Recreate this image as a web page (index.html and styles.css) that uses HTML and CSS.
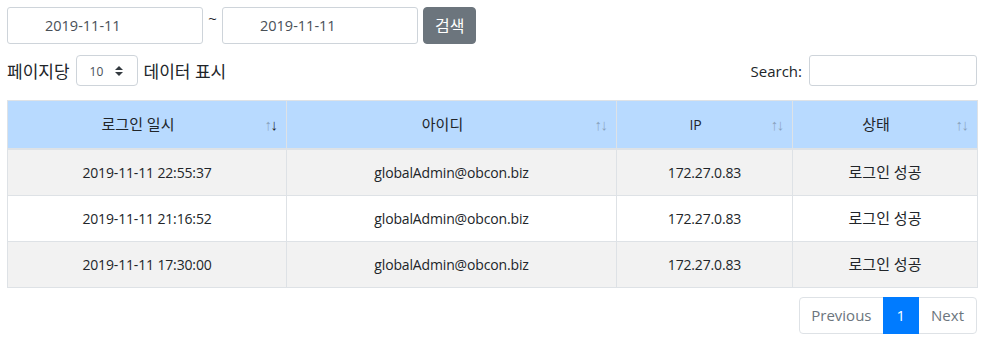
FILE: index.html
```html
<!DOCTYPE html>
<html lang="ko">
<head>
<meta charset="utf-8">
<title>로그인 이력</title>
<link rel="stylesheet" href="styles.css">
</head>
<body>
<div class="page">
  <div class="filter">
    <input class="date-input" type="text" value="2019-11-11">
    <span class="tilde">~</span>
    <input class="date-input" type="text" value="2019-11-11">
    <button class="btn-search" type="button">검색</button>
  </div>

  <div class="toolbar">
    <label class="length">페이지당
      <span class="select"><span class="select-value">10</span>
        <svg class="select-arrow" width="8" height="10" viewBox="0 0 4 5"><path d="M2 0L0 2h4zm0 5L0 3h4z" fill="#343a40"/></svg>
      </span>
      데이터 표시</label>
    <label class="search">Search: <input class="search-box" type="search"></label>
  </div>

  <table class="grid">
    <colgroup>
      <col class="c1"><col class="c2"><col class="c3"><col class="c4">
    </colgroup>
    <thead>
      <tr>
        <th class="sort asc ko">로그인 일시</th>
        <th class="sort ko">아이디</th>
        <th class="sort">IP</th>
        <th class="sort ko">상태</th>
      </tr>
    </thead>
    <tbody>
      <tr class="odd"><td>2019-11-11 22:55:37</td><td>globalAdmin@obcon.biz</td><td>172.27.0.83</td><td class="ko">로그인 성공</td></tr>
      <tr><td>2019-11-11 21:16:52</td><td>globalAdmin@obcon.biz</td><td>172.27.0.83</td><td class="ko">로그인 성공</td></tr>
      <tr class="odd"><td>2019-11-11 17:30:00</td><td>globalAdmin@obcon.biz</td><td>172.27.0.83</td><td class="ko">로그인 성공</td></tr>
    </tbody>
  </table>

  <div class="pager-row">
    <ul class="pagination">
      <li class="page-link disabled prev">Previous</li>
      <li class="page-link active">1</li>
      <li class="page-link disabled next">Next</li>
    </ul>
  </div>
</div>
</body>
</html>
```

FILE: styles.css
```css
* { box-sizing: border-box; }

html, body {
  margin: 0;
  padding: 0;
  background: #fff;
}

body {
  font-family: "Open Sans", "Noto Sans CJK KR", sans-serif;
  color: #212529;
  font-size: 16px;
}

.page {
  padding: 7px 6px 0 7px;
}

/* filter row */
.filter {
  display: flex;
  align-items: flex-start;
  height: 37px;
}

.date-input {
  width: 196px;
  height: 37px;
  border: 1px solid #ced4da;
  border-radius: 3px;
  padding: 0 0 0 37px;
  margin: 0;
  font-family: "Open Sans", "Noto Sans CJK KR", sans-serif;
  font-size: 14.5px;
  color: #495057;
  background: #fff;
  outline: none;
}

.tilde {
  width: 19px;
  text-align: center;
  font-size: 15px;
  line-height: 20px;
  color: #212529;
  margin-top: 1px;
}

.btn-search {
  margin-left: 5px;
  height: 37px;
  padding: 0 11px;
  border: 1px solid #6c757d;
  border-radius: 4px;
  background: #6c757d;
  color: #fff;
  font-family: "Open Sans", "Noto Sans CJK KR", sans-serif;
  font-size: 16px;
  line-height: 1;
}

/* toolbar */
.toolbar {
  margin-top: 11px;
  display: flex;
  justify-content: space-between;
  align-items: center;
  height: 31px;
}

.length {
  display: flex;
  align-items: center;
  gap: 6px;
  font-size: 17px;
  white-space: nowrap;
}

.select {
  display: inline-flex;
  align-items: center;
  justify-content: space-between;
  width: 62px;
  height: 31px;
  border: 1px solid #ced4da;
  border-radius: 4px;
  padding: 0 14px 0 13px;
  background: #fff;
  color: #495057;
}

.select-value {
  font-size: 12px;
  line-height: 1;
  padding-top: 2px;
}

.select-arrow {
  display: block;
}

.search {
  display: flex;
  align-items: center;
  gap: 7px;
  font-size: 15px;
  color: #212529;
}

.search-box {
  width: 168px;
  height: 31px;
  margin: 0;
  border: 1px solid #ced4da;
  border-radius: 3px;
  background: #fff;
  outline: none;
}

/* table */
.grid {
  margin-top: 14px;
  width: 100%;
  table-layout: fixed;
  border-collapse: collapse;
  border: 1px solid #dee2e6;
  font-size: 14px;
  letter-spacing: -0.15px;
}

.c1 { width: 279px; }
.c2 { width: 330px; }
.c3 { width: 176px; }
.c4 { width: 185px; }

.grid th,
.grid td {
  border: 1px solid #dee2e6;
  text-align: center;
  vertical-align: middle;
  line-height: 21px;
  height: 46px;
  padding: 12px;
}

.grid .ko {
  font-size: 15px;
  letter-spacing: 0;
}

.grid th {
  height: 48px;
  background: #b8daff;
  font-weight: 400;
  padding-right: 30px;
  border-bottom-width: 2px;
  position: relative;
}

.grid tbody tr { background: #fff; }
.grid tbody tr.odd { background: #f2f2f2; }

.sort::before,
.sort::after {
  position: absolute;
  bottom: 16px;
  font-family: "Liberation Sans", sans-serif;
  font-size: 15px;
  line-height: 1;
  opacity: 0.3;
  color: #212529;
}

.sort::before {
  content: "\2191";
  right: 14px;
}

.sort::after {
  content: "\2193";
  right: 8px;
}

.sort.asc::after {
  opacity: 1;
}

/* pagination */
.pager-row {
  display: flex;
  justify-content: flex-end;
  margin-top: 9px;
}

.pagination {
  display: flex;
  list-style: none;
  margin: 0;
  padding: 0;
}

.page-link {
  height: 37px;
  line-height: 35px;
  font-size: 15px;
  border: 1px solid #dee2e6;
  margin-left: -1px;
  padding: 0 12px;
  color: #6c757d;
  background: #fff;
}

.page-link.prev {
  margin-left: 0;
  padding: 0 11px;
  border-radius: 4px 0 0 4px;
}

.page-link.next {
  border-radius: 0 4px 4px 0;
}

.page-link.active {
  background: #007bff;
  border-color: #007bff;
  color: #fff;
  position: relative;
  padding: 0 13px;
}
```
